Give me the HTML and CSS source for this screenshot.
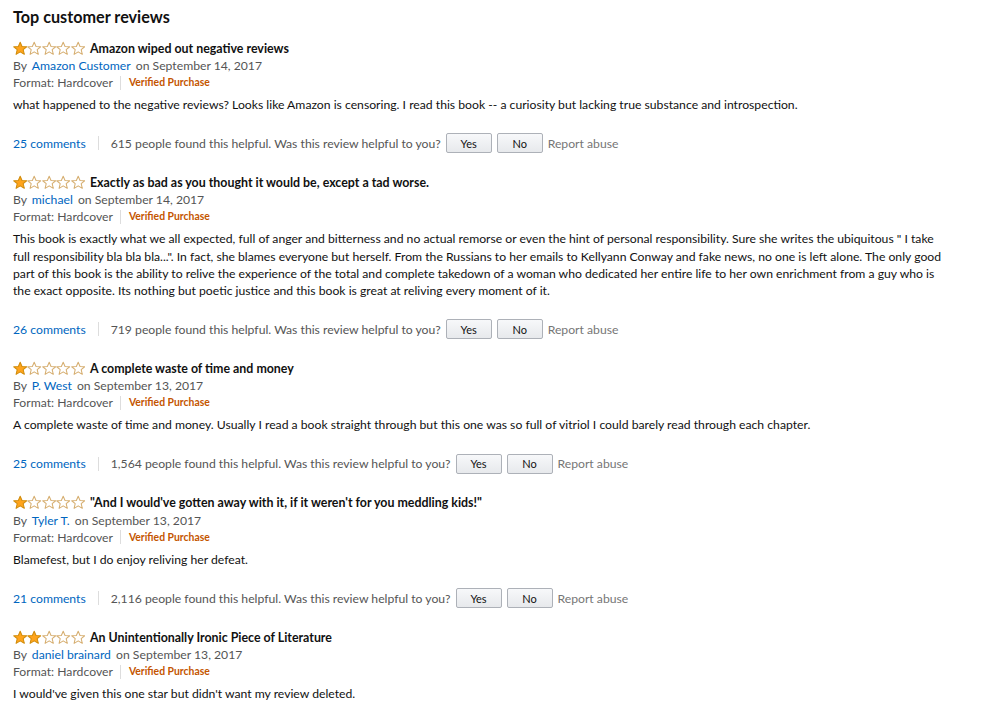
FILE: index.html
```html
<!DOCTYPE html>
<html lang="en">
<head>
    <meta charset="UTF-8">
    <meta name="viewport" content="width=device-width, initial-scale=1.0">
    <title>Top customer reviews</title>
    <link rel="stylesheet" href="styles.css">
</head>
<body>
    <div class="reviews">
        <h2>Top customer reviews</h2>

        <div class="review">
            <div class="review-head">
                <span class="stars">
                    <svg viewBox="0 0 14 14"><polygon class="on" points="7,0.9 8.8,5 13.3,5.3 9.9,8.2 11,12.7 7,10.3 3,12.7 4.1,8.2 0.7,5.3 5.2,5"/></svg>
                    <svg viewBox="0 0 14 14"><polygon points="7,0.9 8.8,5 13.3,5.3 9.9,8.2 11,12.7 7,10.3 3,12.7 4.1,8.2 0.7,5.3 5.2,5"/></svg>
                    <svg viewBox="0 0 14 14"><polygon points="7,0.9 8.8,5 13.3,5.3 9.9,8.2 11,12.7 7,10.3 3,12.7 4.1,8.2 0.7,5.3 5.2,5"/></svg>
                    <svg viewBox="0 0 14 14"><polygon points="7,0.9 8.8,5 13.3,5.3 9.9,8.2 11,12.7 7,10.3 3,12.7 4.1,8.2 0.7,5.3 5.2,5"/></svg>
                    <svg viewBox="0 0 14 14"><polygon points="7,0.9 8.8,5 13.3,5.3 9.9,8.2 11,12.7 7,10.3 3,12.7 4.1,8.2 0.7,5.3 5.2,5"/></svg>
                </span>
                <span class="review-title">Amazon wiped out negative reviews</span>
            </div>
            <div class="byline">By <a href="#">Amazon Customer</a> on September 14, 2017</div>
            <div class="format">Format: Hardcover <span class="divider"></span><span class="verified">Verified Purchase</span></div>
            <p class="review-text">what happened to the negative reviews? Looks like Amazon is censoring. I read this book -- a curiosity but lacking true substance and introspection.</p>
            <div class="actions">
                <a href="#">25 comments</a>
                <span class="divider"></span>
                <span>615 people found this helpful. Was this review helpful to you?</span>
                <button>Yes</button>
                <button>No</button>
                <span class="report">Report abuse</span>
            </div>
        </div>

        <div class="review">
            <div class="review-head">
                <span class="stars">
                    <svg viewBox="0 0 14 14"><polygon class="on" points="7,0.9 8.8,5 13.3,5.3 9.9,8.2 11,12.7 7,10.3 3,12.7 4.1,8.2 0.7,5.3 5.2,5"/></svg>
                    <svg viewBox="0 0 14 14"><polygon points="7,0.9 8.8,5 13.3,5.3 9.9,8.2 11,12.7 7,10.3 3,12.7 4.1,8.2 0.7,5.3 5.2,5"/></svg>
                    <svg viewBox="0 0 14 14"><polygon points="7,0.9 8.8,5 13.3,5.3 9.9,8.2 11,12.7 7,10.3 3,12.7 4.1,8.2 0.7,5.3 5.2,5"/></svg>
                    <svg viewBox="0 0 14 14"><polygon points="7,0.9 8.8,5 13.3,5.3 9.9,8.2 11,12.7 7,10.3 3,12.7 4.1,8.2 0.7,5.3 5.2,5"/></svg>
                    <svg viewBox="0 0 14 14"><polygon points="7,0.9 8.8,5 13.3,5.3 9.9,8.2 11,12.7 7,10.3 3,12.7 4.1,8.2 0.7,5.3 5.2,5"/></svg>
                </span>
                <span class="review-title">Exactly as bad as you thought it would be, except a tad worse.</span>
            </div>
            <div class="byline">By <a href="#">michael</a> on September 14, 2017</div>
            <div class="format">Format: Hardcover <span class="divider"></span><span class="verified">Verified Purchase</span></div>
            <p class="review-text">This book is exactly what we all expected, full of anger and bitterness and no actual remorse or even the hint of personal responsibility. Sure she writes the ubiquitous " I take full responsibility bla bla bla...". In fact, she blames everyone but herself. From the Russians to her emails to Kellyann Conway and fake news, no one is left alone. The only good part of this book is the ability to relive the experience of the total and complete takedown of a woman who dedicated her entire life to her own enrichment from a guy who is the exact opposite. Its nothing but poetic justice and this book is great at reliving every moment of it.</p>
            <div class="actions">
                <a href="#">26 comments</a>
                <span class="divider"></span>
                <span>719 people found this helpful. Was this review helpful to you?</span>
                <button>Yes</button>
                <button>No</button>
                <span class="report">Report abuse</span>
            </div>
        </div>

        <div class="review">
            <div class="review-head">
                <span class="stars">
                    <svg viewBox="0 0 14 14"><polygon class="on" points="7,0.9 8.8,5 13.3,5.3 9.9,8.2 11,12.7 7,10.3 3,12.7 4.1,8.2 0.7,5.3 5.2,5"/></svg>
                    <svg viewBox="0 0 14 14"><polygon points="7,0.9 8.8,5 13.3,5.3 9.9,8.2 11,12.7 7,10.3 3,12.7 4.1,8.2 0.7,5.3 5.2,5"/></svg>
                    <svg viewBox="0 0 14 14"><polygon points="7,0.9 8.8,5 13.3,5.3 9.9,8.2 11,12.7 7,10.3 3,12.7 4.1,8.2 0.7,5.3 5.2,5"/></svg>
                    <svg viewBox="0 0 14 14"><polygon points="7,0.9 8.8,5 13.3,5.3 9.9,8.2 11,12.7 7,10.3 3,12.7 4.1,8.2 0.7,5.3 5.2,5"/></svg>
                    <svg viewBox="0 0 14 14"><polygon points="7,0.9 8.8,5 13.3,5.3 9.9,8.2 11,12.7 7,10.3 3,12.7 4.1,8.2 0.7,5.3 5.2,5"/></svg>
                </span>
                <span class="review-title">A complete waste of time and money</span>
            </div>
            <div class="byline">By <a href="#">P. West</a> on September 13, 2017</div>
            <div class="format">Format: Hardcover <span class="divider"></span><span class="verified">Verified Purchase</span></div>
            <p class="review-text">A complete waste of time and money. Usually I read a book straight through but this one was so full of vitriol I could barely read through each chapter.</p>
            <div class="actions">
                <a href="#">25 comments</a>
                <span class="divider"></span>
                <span>1,564 people found this helpful. Was this review helpful to you?</span>
                <button>Yes</button>
                <button>No</button>
                <span class="report">Report abuse</span>
            </div>
        </div>

        <div class="review">
            <div class="review-head">
                <span class="stars">
                    <svg viewBox="0 0 14 14"><polygon class="on" points="7,0.9 8.8,5 13.3,5.3 9.9,8.2 11,12.7 7,10.3 3,12.7 4.1,8.2 0.7,5.3 5.2,5"/></svg>
                    <svg viewBox="0 0 14 14"><polygon points="7,0.9 8.8,5 13.3,5.3 9.9,8.2 11,12.7 7,10.3 3,12.7 4.1,8.2 0.7,5.3 5.2,5"/></svg>
                    <svg viewBox="0 0 14 14"><polygon points="7,0.9 8.8,5 13.3,5.3 9.9,8.2 11,12.7 7,10.3 3,12.7 4.1,8.2 0.7,5.3 5.2,5"/></svg>
                    <svg viewBox="0 0 14 14"><polygon points="7,0.9 8.8,5 13.3,5.3 9.9,8.2 11,12.7 7,10.3 3,12.7 4.1,8.2 0.7,5.3 5.2,5"/></svg>
                    <svg viewBox="0 0 14 14"><polygon points="7,0.9 8.8,5 13.3,5.3 9.9,8.2 11,12.7 7,10.3 3,12.7 4.1,8.2 0.7,5.3 5.2,5"/></svg>
                </span>
                <span class="review-title">"And I would've gotten away with it, if it weren't for you meddling kids!"</span>
            </div>
            <div class="byline">By <a href="#">Tyler T.</a> on September 13, 2017</div>
            <div class="format">Format: Hardcover <span class="divider"></span><span class="verified">Verified Purchase</span></div>
            <p class="review-text">Blamefest, but I do enjoy reliving her defeat.</p>
            <div class="actions">
                <a href="#">21 comments</a>
                <span class="divider"></span>
                <span>2,116 people found this helpful. Was this review helpful to you?</span>
                <button>Yes</button>
                <button>No</button>
                <span class="report">Report abuse</span>
            </div>
        </div>

        <div class="review">
            <div class="review-head">
                <span class="stars">
                    <svg viewBox="0 0 14 14"><polygon class="on" points="7,0.9 8.8,5 13.3,5.3 9.9,8.2 11,12.7 7,10.3 3,12.7 4.1,8.2 0.7,5.3 5.2,5"/></svg>
                    <svg viewBox="0 0 14 14"><polygon class="on" points="7,0.9 8.8,5 13.3,5.3 9.9,8.2 11,12.7 7,10.3 3,12.7 4.1,8.2 0.7,5.3 5.2,5"/></svg>
                    <svg viewBox="0 0 14 14"><polygon points="7,0.9 8.8,5 13.3,5.3 9.9,8.2 11,12.7 7,10.3 3,12.7 4.1,8.2 0.7,5.3 5.2,5"/></svg>
                    <svg viewBox="0 0 14 14"><polygon points="7,0.9 8.8,5 13.3,5.3 9.9,8.2 11,12.7 7,10.3 3,12.7 4.1,8.2 0.7,5.3 5.2,5"/></svg>
                    <svg viewBox="0 0 14 14"><polygon points="7,0.9 8.8,5 13.3,5.3 9.9,8.2 11,12.7 7,10.3 3,12.7 4.1,8.2 0.7,5.3 5.2,5"/></svg>
                </span>
                <span class="review-title">An Unintentionally Ironic Piece of Literature</span>
            </div>
            <div class="byline">By <a href="#">daniel brainard</a> on September 13, 2017</div>
            <div class="format">Format: Hardcover <span class="divider"></span><span class="verified">Verified Purchase</span></div>
            <p class="review-text">I would've given this one star but didn't want my review deleted.</p>
        </div>
    </div>
</body>
</html>
```

FILE: styles.css
```css
body {
    margin: 0;
    background: #ffffff;
    color: #111111;
    font-family: Lato, "Liberation Sans", sans-serif;
    font-size: 12.2px;
    line-height: 17px;
}
a {
    color: #0066c0;
    text-decoration: none;
}
.reviews {
    width: 939px;
    padding: 6px 13px 0;
}
.reviews h2 {
    margin: 0 0 11px;
    font-size: 16.2px;
    line-height: 22px;
    font-weight: bold;
}
.review {
    margin-bottom: 20px;
}
.review-head {
    display: flex;
    align-items: center;
    height: 18px;
}
.stars {
    display: flex;
    margin-right: 5px;
}
.stars svg {
    width: 14.4px;
    height: 15px;
}
.stars polygon {
    fill: #ffffff;
    stroke: #d6ae70;
    stroke-width: 1;
    stroke-linejoin: round;
}
.stars polygon.on {
    fill: #ffa41c;
    stroke: #d18d0d;
}
.review-title {
    font-weight: bold;
    font-size: 12.4px;
}
.byline,
.format {
    color: #555555;
}
.byline a {
    margin: 0 2px;
}
.format {
    display: flex;
    align-items: center;
}
.divider {
    display: inline-block;
    width: 1px;
    height: 14px;
    background: #dddddd;
    margin: 0 8px 0 7px;
}
.verified {
    color: #c45500;
    font-size: 10.4px;
    font-weight: bold;
}
.review-text {
    margin: 5px 0 0;
    line-height: 17.3px;
}
.actions {
    display: flex;
    align-items: center;
    height: 20px;
    margin-top: 20px;
    color: #555555;
}
.actions .divider {
    margin: 0 12px;
}
.actions button {
    width: 46px;
    height: 20px;
    margin-left: 5px;
    padding: 0;
    border: 1px solid #adb1b8;
    border-radius: 2px;
    background: linear-gradient(#f7f8fa, #e7e9ec);
    color: #111111;
    font-family: inherit;
    font-size: 11px;
}
.report {
    margin-left: 5px;
    color: #767676;
}
```
